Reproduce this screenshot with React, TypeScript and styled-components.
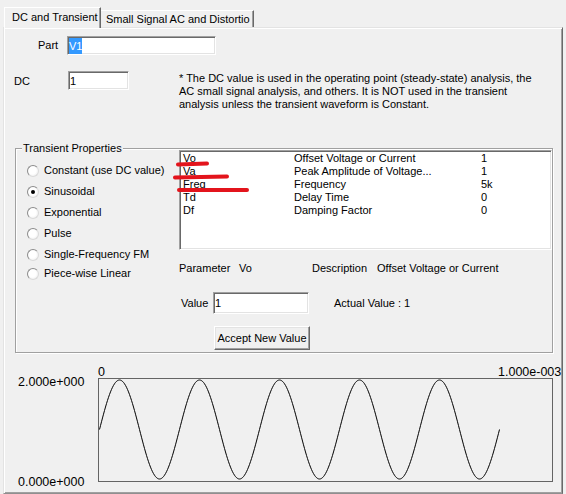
import React from "react";
import styled, { createGlobalStyle } from "styled-components";

const Global = createGlobalStyle`
  html, body { margin: 0; padding: 0; background: #f0f0f0; }
  body { font-family: "Liberation Sans", Arial, sans-serif; font-size: 11px; color: #000; }
  * { box-sizing: border-box; }
`;

const Window = styled.div`
  width: 566px;
  height: 494px;
  background: #f0f0f0;
  overflow: hidden;
`;

const TabStrip = styled.div`
  display: flex;
  align-items: flex-end;
  height: 28px;
  padding-left: 4px;
  margin-bottom: -1px;
  position: relative;
  z-index: 1;
`;

const Tab = styled.div<{ $active?: boolean }>`
  background: #f0f0f0;
  white-space: nowrap;
  overflow: hidden;
  border-top: 1px solid #fff;
  border-left: ${(p) => (p.$active ? "1px solid #fff" : "none")};
  border-right: 1px solid #696969;
  box-shadow: inset -1px 0 #a0a0a0;
  width: ${(p) => (p.$active ? "97px" : "153px")};
  height: ${(p) => (p.$active ? "21px" : "17px")};
  margin-bottom: ${(p) => (p.$active ? "0" : "1px")};
  padding-left: ${(p) => (p.$active ? "7px" : "5px")};
  line-height: ${(p) => (p.$active ? "19px" : "16px")};
`;

const Panel = styled.div`
  margin-left: 3px;
  width: 560px;
  height: 467px;
  border: 1px solid;
  border-color: #e3e3e3 #696969 #8f8f8f #e3e3e3;
  box-shadow: inset 1px 1px #fff, inset -1px -1px #a0a0a0;
  overflow: hidden;
`;

const PartRow = styled.div`
  display: flex;
  align-items: center;
  height: 19px;
  margin-top: 8px;
  padding-left: 34px;
`;

const FieldLabel = styled.span<{ $w: number; $top?: number }>`
  width: ${(p) => p.$w}px;
  flex: none;
  line-height: 13px;
  margin-top: ${(p) => p.$top ?? 0}px;
`;

const TextBox = styled.div<{ $w: number; $h?: number }>`
  width: ${(p) => p.$w}px;
  height: ${(p) => p.$h ?? 19}px;
  flex: none;
  display: flex;
  align-items: center;
  padding-left: 1px;
  background: #fff;
  border: 1px solid;
  border-color: #a0a0a0 #fff #fff #a0a0a0;
  box-shadow: inset 1px 1px #696969, inset -1px -1px #e3e3e3;
  font-size: 11px;
`;

const Selected = styled.span`
  background: #3399ff;
  color: #fff;
  line-height: 16px;
`;

const DCRow = styled.div`
  display: flex;
  align-items: flex-start;
  height: 40px;
  margin-top: 16px;
  padding-left: 10px;
`;

const Note = styled.div`
  margin-left: 50px;
  margin-top: 1px;
  line-height: 13px;
  white-space: nowrap;
`;

const GroupBox = styled.div`
  position: relative;
  margin-top: 37px;
  margin-left: 11px;
  width: 538px;
  height: 205px;
  border: 1px solid #a0a0a0;
  box-shadow: inset 1px 1px #fff, 1px 1px #fff;
  display: flex;
`;

const Legend = styled.span`
  position: absolute;
  top: -7px;
  left: 6px;
  padding: 0 1px;
  line-height: 13px;
  background: #f0f0f0;
`;

const RadioCol = styled.div`
  width: 163px;
  flex: none;
  padding: 15px 0 0 11px;
  display: flex;
  flex-direction: column;
  gap: 8px;
`;

const RadioRow = styled.div<{ $tight?: boolean }>`
  display: flex;
  align-items: center;
  gap: 5px;
  height: 13px;
  line-height: 13px;
  white-space: nowrap;
  margin-top: ${(p) => (p.$tight ? "-2px" : "0")};
`;

const RadioCircle = styled.span<{ $checked?: boolean }>`
  position: relative;
  flex: none;
  width: 12px;
  height: 12px;
  border-radius: 50%;
  border: 1px solid;
  border-color: #8c8c8c #dadada #dadada #8c8c8c;
  background: radial-gradient(circle at 45% 45%, #fff 45%, #e4e4e4 100%);
  &::after {
    content: "";
    display: ${(p) => (p.$checked ? "block" : "none")};
    position: absolute;
    left: 3px;
    top: 3px;
    width: 4px;
    height: 4px;
    border-radius: 50%;
    background: #000;
  }
`;

const RightCol = styled.div`
  position: relative;
  width: 373px;
  flex: none;
  padding-top: 1px;
  display: flex;
  flex-direction: column;
`;

const ListBox = styled.div`
  height: 100px;
  background: #fff;
  border: 1px solid;
  border-color: #a0a0a0 #fff #fff #a0a0a0;
  box-shadow: inset 1px 1px #696969, inset -1px -1px #e3e3e3;
  padding: 1px 0 0 3px;
`;

const ListRow = styled.div`
  display: grid;
  grid-template-columns: 111px 187px 1fr;
  height: 13px;
  line-height: 13px;
  white-space: nowrap;
`;

const Marks = styled.svg`
  position: absolute;
  left: -6px;
  top: 10px;
  pointer-events: none;
  overflow: visible;
`;

const ParamRow = styled.div`
  display: grid;
  grid-template-columns: 60px 73px 65px auto;
  margin-top: 12px;
  line-height: 13px;
  white-space: nowrap;
`;

const ValueRow = styled.div`
  display: flex;
  align-items: center;
  height: 22px;
  margin-top: 17px;
  padding-left: 2px;
`;

const Actual = styled.span`
  margin-left: 25px;
  line-height: 13px;
`;

const Button = styled.div`
  margin-top: 12px;
  margin-left: 35px;
  width: 96px;
  height: 24px;
  display: flex;
  align-items: center;
  justify-content: center;
  white-space: nowrap;
  background: #f0f0f0;
  border: 1px solid;
  border-color: #fff #696969 #696969 #fff;
  box-shadow: inset -1px -1px #a0a0a0, inset 1px 1px #e3e3e3;
`;

const ChartArea = styled.div`
  display: flex;
  margin-top: 13px;
  margin-left: 14px;
  font-size: 12.5px;
`;

const AxisCol = styled.div`
  width: 80px;
  height: 123px;
  flex: none;
  padding-top: 9px;
  display: flex;
  flex-direction: column;
  justify-content: space-between;
  line-height: 14px;
`;

const PlotCol = styled.div`
  width: 455px;
  flex: none;
`;

const TopLabels = styled.div`
  display: grid;
  grid-template-columns: 400px auto;
  height: 12px;
  line-height: 12px;
  white-space: nowrap;
`;

const PlotFrame = styled.div`
  width: 455px;
  height: 104px;
  border: 1px solid #646464;
`;

const sinePath = (() => {
  const pts: string[] = [];
  for (let x = 0; x <= 400; x += 1) {
    const y = 50.5 - 49.5 * Math.sin((2 * Math.PI * x) / 80);
    pts.push(`${x === 0 ? "M" : "L"}${x + 0.5},${y.toFixed(2)}`);
  }
  return pts.join(" ");
})();

const params = [
  { name: "Vo", desc: "Offset Voltage or Current", value: "1" },
  { name: "Va", desc: "Peak Amplitude of Voltage...", value: "1" },
  { name: "Freq", desc: "Frequency", value: "5k" },
  { name: "Td", desc: "Delay Time", value: "0" },
  { name: "Df", desc: "Damping Factor", value: "0" },
];

const waveforms = [
  "Constant (use DC value)",
  "Sinusoidal",
  "Exponential",
  "Pulse",
  "Single-Frequency FM",
  "Piece-wise Linear",
];

export default function App() {
  return (
    <Window>
      <Global />
      <TabStrip>
        <Tab $active>DC and Transient</Tab>
        <Tab>Small Signal AC and Distortio</Tab>
      </TabStrip>
      <Panel>
        <PartRow>
          <FieldLabel $w={29}>Part</FieldLabel>
          <TextBox $w={149}>
            <Selected>V1</Selected>
          </TextBox>
        </PartRow>
        <DCRow>
          <FieldLabel $w={54} $top={4}>DC</FieldLabel>
          <TextBox $w={61}>1</TextBox>
          <Note>
            * The DC value is used in the operating point (steady-state) analysis, the
            <br />
            AC small signal analysis, and others. It is NOT used in the transient
            <br />
            analysis unless the transient waveform is Constant.
          </Note>
        </DCRow>
        <GroupBox>
          <Legend>Transient Properties</Legend>
          <RadioCol>
            {waveforms.map((w, i) => (
              <RadioRow key={w} $tight={i === waveforms.length - 1}>
                <RadioCircle $checked={w === "Sinusoidal"} />
                {w}
              </RadioRow>
            ))}
          </RadioCol>
          <RightCol>
            <ListBox>
              {params.map((p) => (
                <ListRow key={p.name}>
                  <span>{p.name}</span>
                  <span>{p.desc}</span>
                  <span>{p.value}</span>
                </ListRow>
              ))}
            </ListBox>
            <Marks width="80" height="36" viewBox="0 0 80 36">
              <g stroke="#e3141c" strokeWidth="4" strokeLinecap="round" fill="none">
                <path d="M5,5.5 L34,4.5" />
                <path d="M2,18.5 L54,17.5" />
                <path d="M6,31 L74,31" />
              </g>
            </Marks>
            <ParamRow>
              <span>Parameter</span>
              <span>Vo</span>
              <span>Description</span>
              <span>Offset Voltage or Current</span>
            </ParamRow>
            <ValueRow>
              <FieldLabel $w={32}>Value</FieldLabel>
              <TextBox $w={96} $h={22}>1</TextBox>
              <Actual>Actual Value : 1</Actual>
            </ValueRow>
            <Button>Accept New Value</Button>
          </RightCol>
        </GroupBox>
        <ChartArea>
          <AxisCol>
            <span>2.000e+000</span>
            <span>0.000e+000</span>
          </AxisCol>
          <PlotCol>
            <TopLabels>
              <span>0</span>
              <span>1.000e-003</span>
            </TopLabels>
            <PlotFrame>
              <svg width="453" height="102" viewBox="0 0 453 102">
                <path d={sinePath} stroke="#000" strokeWidth="1" fill="none" />
              </svg>
            </PlotFrame>
          </PlotCol>
        </ChartArea>
      </Panel>
    </Window>
  );
}
